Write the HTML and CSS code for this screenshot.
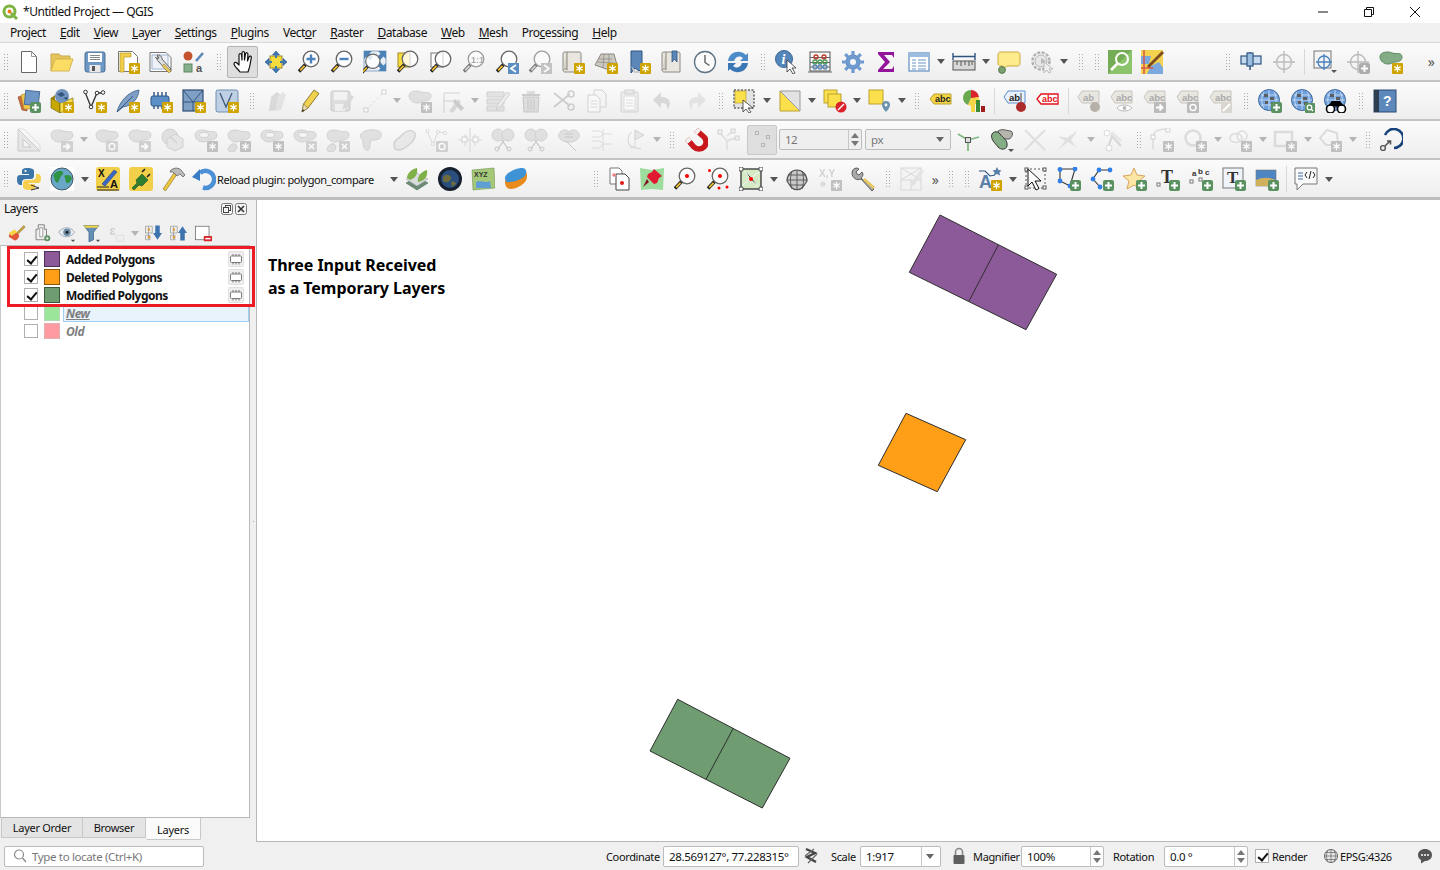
FILE: index.html
```html
<!DOCTYPE html>
<html lang="en">
<head>
    <meta charset="UTF-8">
    <title>*Untitled Project — QGIS</title>
    <link rel="stylesheet" href="styles.css">
</head>
<body>

<!-- icon sprite -->
<svg class="sprite" xmlns="http://www.w3.org/2000/svg">
    <!-- badges -->
    <symbol id="b-star" viewBox="0 0 24 24"><rect x="13" y="13" width="11" height="11" rx="1" fill="#cfa400"/><path d="M18.5 14.8v7.400M15.300 16.600l6.400 3.700M21.700 16.600l-6.400 3.700" stroke="#fff" stroke-width="1.300"/></symbol>
    <symbol id="b-plus" viewBox="0 0 24 24"><rect x="13" y="13" width="11" height="11" rx="2" fill="#5a9160"/><path d="M18.500 15v7M15 18.500h7" stroke="#fff" stroke-width="2"/></symbol>
    <symbol id="b-x" viewBox="0 0 24 24"><rect x="13" y="13" width="11" height="11" rx="1" fill="#bbb"/><path d="M16 16l5 5M21 16l-5 5" stroke="#fff" stroke-width="1.600"/></symbol>
    <symbol id="b-arr" viewBox="0 0 24 24"><rect x="11" y="13" width="12" height="11" rx="1" fill="#bbb"/><path d="M13 18.500h6M16.500 15.500l3 3-3 3" stroke="#fff" stroke-width="1.800" fill="none"/></symbol>
    <symbol id="b-rot" viewBox="0 0 24 24"><rect x="11" y="13" width="12" height="11" rx="1" fill="#bbb"/><circle cx="17" cy="18.500" r="3" stroke="#fff" stroke-width="1.400" fill="none"/></symbol>

    <!-- row one -->
    <symbol id="new" viewBox="0 0 24 24"><path d="M4.500 1.500h10l5 5v16h-15z" fill="#fff" stroke="#666"/><path d="M14.500 1.500v5h5" fill="none" stroke="#999"/></symbol>
    <symbol id="open" viewBox="0 0 24 24"><path d="M1 21V4h8l2 2h9v3H6z" fill="#e6c65c" stroke="#c8a94a"/><path d="M1 21 5 9h18l-4 12z" fill="#fbdc65" stroke="#d4b750"/></symbol>
    <symbol id="save" viewBox="0 0 24 24"><rect x="2" y="2" width="20" height="20" rx="2" fill="#6d97c4" stroke="#4d7096"/><rect x="5" y="3" width="14" height="9" fill="#fff"/><path d="M7 5.500h10M7 7.500h10M7 9.500h10" stroke="#888"/><rect x="6.500" y="15" width="11" height="7" fill="#e8e8e8"/><rect x="9" y="16" width="3" height="5" fill="#555"/></symbol>
    <symbol id="tpl" viewBox="0 0 24 24"><path d="M2.500 1.500h14l5 5v15h-19z" fill="#fff" stroke="#777"/><path d="M4 3h11v4H8v15H4z" fill="#f2cf4b" stroke="#b79a2f" stroke-width=".7"/><use href="#b-star"/></symbol>
    <symbol id="layout" viewBox="0 0 24 24"><path d="M1 2.500h16l5 5v14H1z" fill="#fff" stroke="#777"/><rect x="3" y="5" width="16" height="14" fill="#eef2f8" stroke="#9db4d2"/><path d="M9 6a4 4 0 0 0 1 6l9 10 3-3-9-10a4 4 0 0 0-5-4l2 3-2 1-2-2" fill="#ddd" stroke="#666"/><path d="M15 14l7 7-2 2-7-7z" fill="#e5c75e" stroke="#8c7a37" stroke-width=".6"/></symbol>
    <symbol id="style" viewBox="0 0 24 24"><circle cx="6" cy="6" r="4.500" fill="#c4532d"/><path d="M14 11 21 3" stroke="#5b86b5" stroke-width="2.600"/><rect x="2" y="14" width="8" height="8" fill="#85b08a" stroke="#5f8664"/><text x="14" y="22" class="sm" font-size="11" fill="#555">a</text></symbol>
    <symbol id="pan" viewBox="0 0 24 24"><path d="M9 22c-2-3-6-6-6-8 0-2 2-2 3-1l2 2V5c0-2 2-2 2.500 0l.5 5V3c0-2 2.500-2 2.500 0v7l1-6c.5-2 2.500-1.500 2.400.5L16.500 11l1.500-4c.8-1.500 2.600-1 2.300.7L19 15c-.5 3-1.500 5-2 7z" fill="#fff" stroke="#111" stroke-width="1.200" stroke-linejoin="round"/></symbol>
    <symbol id="pansel" viewBox="0 0 24 24"><rect x="6" y="6" width="12" height="12" fill="#f7dc3e" stroke="#a08a20"/><path d="M12 1l3.500 4h-7zM12 23l-3.500-4h7zM1 12l4-3.500v7zM23 12l-4 3.500v-7z" fill="#3f79b5" stroke="#234f7e" stroke-width=".6"/><path d="M12 4v4M12 20v-4M4 12h4M20 12h-4" stroke="#3f79b5" stroke-width="2"/></symbol>
    <symbol id="mag" viewBox="0 0 24 24"><path d="M9 14 2 21.500" stroke="#222" stroke-width="3.400"/><path d="M7.500 15.800 3.200 20.300" stroke="#f0c030" stroke-width="1.800"/><circle cx="14" cy="9" r="7.800" fill="#fff" fill-opacity=".8" stroke="#666" stroke-width="1.300"/></symbol>
    <symbol id="zin" viewBox="0 0 24 24"><use href="#mag"/><path d="M14 4.500v9M9.500 9h9" stroke="#4b82bd" stroke-width="2.400"/></symbol>
    <symbol id="zout" viewBox="0 0 24 24"><use href="#mag"/><path d="M9.500 9h9" stroke="#4b82bd" stroke-width="2.400"/></symbol>
    <symbol id="zfull" viewBox="0 0 24 24"><rect x="1" y="1" width="22" height="20" fill="#e8eef5" stroke="#4b78a8" stroke-width=".6"/><path d="M1 1h8L6.500 3.500 10 7 7 10 3.500 6.500 1 9zM23 1h-8l2.500 2.500L14 7l3 3 3.500-3.500L23 9zM23 21h-8l2.500-2.500L14 15l3-3 3.500 3.500L23 13z" fill="#4b82b8"/><use href="#mag" x="-3" y="3" width="22" height="22"/></symbol>
    <symbol id="zsel" viewBox="0 0 24 24"><rect x="2" y="3" width="12" height="14" fill="#f7dc3e" stroke="#a08a20"/><use href="#mag"/><path d="M14 2v14" stroke="#ddd"/></symbol>
    <symbol id="zlay" viewBox="0 0 24 24"><rect x="2" y="3" width="12" height="14" fill="#fff" stroke="#777"/><use href="#mag"/><path d="M14 2v14" stroke="#ddd"/></symbol>
    <symbol id="znat" viewBox="0 0 24 24"><use href="#mag"/><text x="9" y="13" class="sm" font-size="9" fill="#777">1:1</text></symbol>
    <symbol id="zlast" viewBox="0 0 24 24"><use href="#mag"/><rect x="13" y="13" width="11" height="11" fill="#5b8fc4"/><path d="M21 15l-5 3.500 5 3.500" fill="none" stroke="#fff" stroke-width="1.800"/></symbol>
    <symbol id="znext" viewBox="0 0 24 24"><use href="#mag"/><rect x="13" y="13" width="11" height="11" fill="#8fa9c4"/><path d="M16 15l5 3.500-5 3.500" fill="none" stroke="#fff" stroke-width="1.800"/></symbol>
    <symbol id="scroll" viewBox="0 0 24 24"><path d="M4 2c-2 0-2 1-2 2v16c0 1 1 2 2 2h16V4c0-1 0-2-2-2z" fill="#e9e6df" stroke="#8b8880"/><path d="M6 2v18c-1-2-3-1-4 0" fill="#d5d1c7" stroke="#8b8880"/></symbol>
    <symbol id="newmap" viewBox="0 0 24 24"><use href="#scroll"/><use href="#b-star"/></symbol>
    <symbol id="map3d" viewBox="0 0 24 24"><path d="M1 15 7 4h13l3 11-8 5z" fill="#ccc9c2" stroke="#8a877f"/><path d="M5 9l13 0M3 12l17 1M10 4l-1 14M15 4l0 14" stroke="#8a877f" stroke-width=".7"/><use href="#b-star"/></symbol>
    <symbol id="bmk" viewBox="0 0 24 24"><path d="M4 1h11v17l-3 3-4-3-4 5z" fill="#5a87b8" stroke="#2f5480"/><path d="M4 16l5 5h6v2H7z" fill="#ccc"/><use href="#b-star"/></symbol>
    <symbol id="bmks" viewBox="0 0 24 24"><use href="#scroll"/><path d="M12 1h5v11l-2.500-3-2.500 3z" fill="#5a87b8" stroke="#2f5480" stroke-width=".8"/></symbol>
    <symbol id="clock" viewBox="0 0 24 24"><circle cx="12" cy="12" r="10.500" fill="#fbfbfb" stroke="#5c7182" stroke-width="1.300"/><path d="M12 5v7.500l4.500 3" fill="none" stroke="#555" stroke-width="1.300"/></symbol>
    <symbol id="refresh" viewBox="0 0 24 24"><path d="M2 11C3 4 9 1 14 2c3 .5 5 2 6 3l2-2v8h-8l3-3c-2-2-7-3-9 3z" fill="#4c8cc9"/><path d="M22 13c-1 7-7 10-12 9-3-.5-5-2-6-3l-2 2v-8h8l-3 3c2 2 7 3 9-3z" fill="#3a78b5"/></symbol>
    <symbol id="ident" viewBox="0 0 24 24"><circle cx="9" cy="9" r="8.500" fill="#5486ba" stroke="#3b6896"/><text x="6.500" y="14" class="it" font-size="14" fill="#fff">i</text><path d="M12 10v12l3-3 3 5 2-1-3-5h4z" fill="#fff" stroke="#333" stroke-width=".8"/></symbol>
    <symbol id="abacus" viewBox="0 0 24 24"><rect x="2" y="2" width="20" height="19" fill="#f6f6f6" stroke="#555"/><path d="M2 7.500h20M2 12.500h20M2 17h20M0 22h24" stroke="#666"/><g fill="none" stroke-width="1.300"><circle cx="8" cy="7" r="2" stroke="#c0392b"/><circle cx="16" cy="7" r="2" stroke="#c0392b"/><circle cx="7" cy="12" r="2" stroke="#4f9a56"/><circle cx="12" cy="12" r="2" stroke="#4f9a56"/><circle cx="17" cy="12" r="2" stroke="#4f9a56"/><circle cx="7" cy="17" r="2" stroke="#5b86b5"/><circle cx="12" cy="17" r="2" stroke="#5b86b5"/><circle cx="17" cy="17" r="2" stroke="#5b86b5"/></g></symbol>
    <symbol id="gear" viewBox="0 0 24 24"><circle cx="12" cy="12" r="7" fill="#6e9ad0" stroke="#4d7bb3"/><circle cx="12" cy="12" r="3" fill="#f5f5f5"/><path d="M12 1v5M12 18v5M1 12h5M18 12h5M4.200 4.200l3.500 3.500M16.300 16.300l3.500 3.500M19.800 4.200l-3.500 3.500M7.700 16.300l-3.500 3.500" stroke="#6e9ad0" stroke-width="3.200"/></symbol>
    <symbol id="sigma" viewBox="0 0 24 24"><path d="M4 2h16v6l-2-3H10l6 7-7 7h9l2-3v6H4v-2l7-8-7-8z" fill="#93149a"/></symbol>
    <symbol id="table" viewBox="0 0 24 24"><rect x="2" y="3" width="20" height="18" fill="#fff" stroke="#6a95c4" stroke-width="1.300"/><rect x="2" y="3" width="20" height="4" fill="#9dbde0"/><path d="M5 10h4M11 10h8M5 13h4M11 13h8M5 16h4M11 16h8M5 19h4M11 19h8" stroke="#6a95c4"/></symbol>
    <symbol id="measure" viewBox="0 0 24 24"><path d="M1 3v7M23 3v7M1 6.500h22" stroke="#2f5480" stroke-width="1.400"/><rect x="1" y="11" width="22" height="9" fill="#d8d8d8" stroke="#555"/><path d="M5 11v4M9 11v5M13 11v4M17 11v5M20 11v4" stroke="#555"/></symbol>
    <symbol id="tip" viewBox="0 0 24 24"><path d="M4 2h16c2 0 3 1 3 3v8c0 2-1 3-3 3H10l-4 3v-3H4c-2 0-3-1-3-3V5c0-2 1-3 3-3z" fill="#fdeb8c" stroke="#c9a93c"/><circle cx="5" cy="20" r="3.400" fill="#7ca36f" stroke="#56784d"/></symbol>
    <symbol id="action" viewBox="0 0 24 24"><circle cx="11" cy="11" r="6" fill="#ddd" stroke="#888"/><circle cx="11" cy="11" r="8.500" fill="none" stroke="#888" stroke-width="2.500" stroke-dasharray="3 1.500"/><path d="M11 8v6l5-3z" fill="#999"/><path d="M14 12v11l3-3 2 3 2-1-2-3h4z" fill="#eee" stroke="#888" stroke-width=".8"/></symbol>
    <symbol id="greenlens" viewBox="0 0 24 24"><rect width="24" height="24" fill="#74ad55"/><path d="M0 24 24 0v24z" fill="#8bc46a"/><circle cx="14" cy="9" r="6" fill="none" stroke="#fff" stroke-width="2"/><path d="M9.500 13.500 3 20" stroke="#fff" stroke-width="2.600"/></symbol>
    <symbol id="osm" viewBox="0 0 24 24"><rect width="22" height="24" fill="#f3d24f"/><path d="M0 6h10l-2 8H0zM10 16l8-4 4 6v6H6z" fill="#7ba8dd"/><path d="M3 0v24M0 18h12" stroke="#d9554d" stroke-width="1.500"/><path d="M6 16 21 1l2 2L8 18z" fill="#7a4a21"/></symbol>
    <symbol id="decor" viewBox="0 0 24 24"><path d="M11 2v18" stroke="#2f5480" stroke-width="1.500"/><rect x="2" y="6" width="20" height="8" fill="#c6daf0" stroke="#2f5480" stroke-width="1.200"/><rect x="8" y="3" width="6" height="13" fill="#9abde0" stroke="#2f5480" stroke-width="1.200"/></symbol>
    <symbol id="cross" viewBox="0 0 24 24"><path d="M12 1v22M1 12h22" stroke="#999" stroke-width="1.400"/><circle cx="12" cy="12" r="7.500" fill="none" stroke="#999" stroke-width="1.400"/></symbol>
    <symbol id="crsbox" viewBox="0 0 24 24"><rect x="1" y="1" width="17" height="17" fill="#f4f4f4" stroke="#777"/><circle cx="11" cy="12" r="6" fill="none" stroke="#4b82bd" stroke-width="1.300"/><path d="M11 4v16M3 12h16" stroke="#4b82bd" stroke-width="1.300"/><path d="M18 20h6l-3 3z" fill="#555"/></symbol>
    <symbol id="crsplus" viewBox="0 0 24 24"><use href="#cross"/><use href="#b-plus"/></symbol>
    <symbol id="blob" viewBox="0 0 24 24"><path d="M1 7C1 3 5 2 9 2c3 0 4 1.500 7 1.500S23 3 23 7s-4 5-7 5-3 2-7 2-8-3-8-7z" fill="#d5d2cb" stroke="#bdbab2"/></symbol>
    <symbol id="blobg" viewBox="0 0 24 24"><path d="M1 7C1 3 5 2 9 2c3 0 4 1.500 7 1.500S23 3 23 7s-4 5-7 5-3 2-7 2-8-3-8-7z" fill="#85ad85" stroke="#5f8664"/><use href="#b-star"/></symbol>

    <!-- row two -->
    <symbol id="dsm" viewBox="0 0 24 24"><path d="M1 8l9-3v17l-5-1z" fill="#c96b3a" stroke="#8e4a27" stroke-width=".6"/><path d="M4 6l9-3 3 17H7z" fill="#f0c64d" stroke="#a88b2d" stroke-width=".6"/><rect x="8" y="2" width="14" height="14" transform="rotate(6 15 9)" fill="#6e97c8" stroke="#4d7096"/><use href="#b-plus"/></symbol>
    <symbol id="gpkg" viewBox="0 0 24 24"><path d="M1 9l4-3v12l-4-3z" fill="#9a8114"/><path d="M1 9l9 5v10l-9-5z" fill="#c6a800" stroke="#6c5c00" stroke-width=".6"/><path d="M23 9l-13 5v10l13-5z" fill="#f4dc50" stroke="#6c5c00" stroke-width=".6"/><circle cx="12" cy="7" r="7" fill="#6f93bc"/><path d="M7 5l5-2 3 3-4 2zM13 9l5-1-1 3z" fill="#33557d"/><use href="#b-star"/></symbol>
    <symbol id="shp" viewBox="0 0 24 24"><path d="M2 3l6 15L14 4l6 0" fill="none" stroke="#333" stroke-width="1.300"/><g fill="#fff" stroke="#333"><circle cx="2.500" cy="3" r="1.800"/><circle cx="8" cy="18" r="1.800"/><circle cx="14" cy="4" r="1.800"/><circle cx="20" cy="3.500" r="1.800"/></g><use href="#b-star"/></symbol>
    <symbol id="feather" viewBox="0 0 24 24"><path d="M1 23C4 12 12 3 23 1c-1 8-5 15-16 17z" fill="#7f9fc4" stroke="#4d7096"/><path d="M1 23 17 7" stroke="#2f5480" stroke-width=".9"/><use href="#b-star"/></symbol>
    <symbol id="chip" viewBox="0 0 24 24"><rect x="2" y="7" width="18" height="10" rx="2" fill="#5a8fc7" stroke="#2f5480"/><path d="M5 3v4M9 3v4M13 3v4M17 3v4M5 17v3M9 17v3M13 17v3" stroke="#2f5480" stroke-width="1.400"/><use href="#b-star"/></symbol>
    <symbol id="mesh" viewBox="0 0 24 24"><rect x="1" y="1" width="20" height="21" fill="#7f9fc4" stroke="#2f4f73" stroke-width="1.200"/><path d="M1 13h20M11 13v9M1 1l10 12M21 1 11 13" stroke="#2f4f73" stroke-width=".9"/><use href="#b-star"/></symbol>
    <symbol id="vtx" viewBox="0 0 24 24"><rect x="1" y="1" width="22" height="22" rx="2" fill="#bfd0e4" stroke="#6f8fb0"/><path d="M5 4l6 14 6-14" fill="none" stroke="#3d5a7a" stroke-width="1.300"/><use href="#b-star"/></symbol>
    <symbol id="pencils" viewBox="0 0 24 24"><path d="M5 22 7 8l6-5 4 3-4 15z" fill="#ccc9c2"/><path d="M11 22l3-15 5-4 3 3-5 15z" fill="#dbd8d2"/></symbol>
    <symbol id="pencil" viewBox="0 0 24 24"><path d="M5 23 6.500 15 17 1l5 3.500L11 19z" fill="#f0d24f" stroke="#8c7a37"/><path d="M5 23 6.500 15l4.500 4z" fill="#e8d9b8" stroke="#8c7a37" stroke-width=".7"/><path d="M5 23l.6-3 2 1.500z" fill="#333"/></symbol>
    <symbol id="saveedit" viewBox="0 0 24 24"><rect x="1" y="2" width="19" height="20" rx="2" fill="#d3d0c9" stroke="#b0ada6"/><rect x="4" y="3" width="13" height="8" fill="#f1f0ed"/><rect x="5" y="15" width="10" height="7" fill="#eee"/><path d="M12 21l2-6 7-9 3 2-7 10z" fill="#c9c6be"/></symbol>
    <symbol id="digit" viewBox="0 0 24 24"><path d="M3 21 21 3" stroke="#ccc" stroke-dasharray="3 2"/><rect x="1" y="19" width="4" height="4" fill="#fff" stroke="#bbb"/><rect x="19" y="1" width="4" height="4" fill="#fff" stroke="#bbb"/></symbol>
    <symbol id="blobstar" viewBox="0 0 24 24"><use href="#blob"/><use href="#b-star"/></symbol>
    <symbol id="vtool" viewBox="0 0 24 24"><path d="M3 4v20M3 4h16M3 12h12" stroke="#bbb"/><path d="M8 22l9-12 3 3-8 11z" fill="#c9c6be"/><path d="M14 10l9 9-3 3-8-9z" fill="#b5b2aa"/></symbol>
    <symbol id="editm" viewBox="0 0 24 24"><path d="M1 3h17v5H1zM1 10h17v5H1zM1 17h17v5H1z" fill="#d9d6cf" stroke="#bdbab2"/><path d="M10 21l2-6 9-12 3 2-9 12z" fill="#e8e6e0" stroke="#bdbab2"/></symbol>
    <symbol id="trash" viewBox="0 0 24 24"><path d="M3 5h18v2H3z" fill="#bcb0ad"/><path d="M8 2h8v3H8z" fill="#ccc"/><path d="M4 8h16l-1 15H5z" fill="#d6ceca" stroke="#b3a6a2"/><path d="M9 10v11M12 10v11M15 10v11" stroke="#b3a6a2"/></symbol>
    <symbol id="cut" viewBox="0 0 24 24"><path d="M2 4l16 13M2 18 18 5" stroke="#b5b5b5" stroke-width="1.800"/><circle cx="19" cy="5" r="3" fill="none" stroke="#b5b5b5" stroke-width="1.500"/><circle cx="19" cy="18" r="3" fill="none" stroke="#b5b5b5" stroke-width="1.500"/></symbol>
    <symbol id="copy" viewBox="0 0 24 24"><path d="M9 1h8l4 4v13H9z" fill="#f4f4f4" stroke="#bbb"/><path d="M3 6h8l4 4v13H3z" fill="#fafafa" stroke="#bbb"/><path d="M5.500 12h7M5.500 15h7M5.500 18h7" stroke="#ccc"/></symbol>
    <symbol id="paste" viewBox="0 0 24 24"><rect x="3" y="3" width="17" height="20" rx="1" fill="#ece9e4" stroke="#bbb"/><rect x="7" y="1" width="9" height="4" fill="#ddd" stroke="#bbb"/><rect x="6" y="7" width="11" height="14" fill="#fff" stroke="#ccc"/><path d="M8 11h7M8 14h7M8 17h7" stroke="#ccc"/></symbol>
    <symbol id="undo" viewBox="0 0 24 24"><path d="M10 3 2 11l8 8v-5c5 0 7 2 6 7 5-6 4-13-6-13z" fill="#c9c6be"/></symbol>
    <symbol id="redo" viewBox="0 0 24 24"><path d="M14 3l8 8-8 8v-5c-5 0-7 2-6 7-5-6-4-13 6-13z" fill="#dbd8d2"/></symbol>
    <symbol id="sel" viewBox="0 0 24 24"><rect x="1" y="1" width="20" height="18" fill="#e2e2e2" stroke="#222" stroke-dasharray="2 1.500"/><rect x="2" y="2" width="11" height="12" fill="#fbe04b" stroke="#b9a030" stroke-width=".7"/><path d="M10 11v12l3-3 3 4 2-1-3-4h5z" fill="#fff" stroke="#333" stroke-width=".8"/></symbol>
    <symbol id="selattr" viewBox="0 0 24 24"><path d="M2 2v20h20z" fill="#fbe04b" stroke="#b9a030"/><path d="M2 2h20v20z" fill="#e2e2e2" stroke="#999"/></symbol>
    <symbol id="desel" viewBox="0 0 24 24"><rect x="1" y="1" width="13" height="13" fill="#fbe04b" stroke="#b9a030"/><rect x="5" y="5" width="13" height="13" fill="#fbe04b" stroke="#b9a030"/><circle cx="18" cy="18" r="5.500" fill="#d9222a"/><path d="M15 21l6-6" stroke="#fff" stroke-width="1.400"/></symbol>
    <symbol id="locsel" viewBox="0 0 24 24"><rect x="1" y="1" width="14" height="14" fill="#fbe04b" stroke="#b9a030"/><path d="M18 12a4 4 0 0 1 4 4c0 3-4 7-4 7s-4-4-4-7a4 4 0 0 1 4-4z" fill="#6c93ad"/><circle cx="18" cy="16" r="1.400" fill="#fff"/></symbol>
    <symbol id="abc" viewBox="0 0 24 24"><path d="M5 5h17v10H5L1 10z" fill="#f3d545" stroke="#b9a030"/><text x="6" y="13" class="sm" font-size="9" fill="#222">abc</text></symbol>
    <symbol id="pie" viewBox="0 0 24 24"><path d="M9 1a8 8 0 0 1 8 7l-8 2z" fill="#d9222a"/><path d="M1 9a8 8 0 0 1 8-8v8l-3 7a8 8 0 0 1-5-7z" fill="#6aa84f"/><path d="M9 9l8-1a8 8 0 0 1-11 8z" fill="#f3d545"/><rect x="9" y="14" width="4" height="9" fill="#f3d545"/><rect x="14" y="11" width="4" height="12" fill="#3a8a3a"/><rect x="19" y="17" width="4" height="6" fill="#a01d1d"/></symbol>
    <symbol id="abcblue" viewBox="0 0 24 24"><path d="M5 2h17v12H5L1 8z" fill="#e7f0fb" stroke="#5b8fd1"/><text x="6" y="11.500" class="sm" font-size="9.500" fill="#222">ab</text><path d="M18 4v10" stroke="#999" stroke-width="2"/><circle cx="18" cy="18" r="5" fill="#ad2a2a"/></symbol>
    <symbol id="abcred" viewBox="0 0 24 24"><path d="M5 5h17v10H5L1 10z" fill="#fff" stroke="#e3101a" stroke-width="1.300"/><text x="6" y="13" class="sm" font-size="9" fill="#e3101a">abc</text></symbol>
    <symbol id="abcg" viewBox="0 0 24 24"><path d="M5 2h17v12H5L1 8z" fill="#e8e6e0" stroke="#c9c6be"/><text x="6" y="11.500" class="sm" font-size="9.500" fill="#aaa">abc</text></symbol>
    <symbol id="abcpin" viewBox="0 0 24 24"><path d="M5 2h17v12H5L1 8z" fill="#e8e6e0" stroke="#c9c6be"/><text x="6" y="11.500" class="sm" font-size="9.500" fill="#aaa">ab</text><circle cx="18" cy="18" r="5" fill="#b5b0a8"/></symbol>
    <symbol id="abceye" viewBox="0 0 24 24"><use href="#abcg"/><path d="M7 19c3-4 11-4 15 0-4 4-12 4-15 0z" fill="#fff" stroke="#bbb"/><circle cx="14.500" cy="19" r="2" fill="#bbb"/></symbol>
    <symbol id="abcarr" viewBox="0 0 24 24"><use href="#abcg"/><use href="#b-arr"/></symbol>
    <symbol id="abcrot" viewBox="0 0 24 24"><use href="#abcg"/><use href="#b-rot"/></symbol>
    <symbol id="abcedit" viewBox="0 0 24 24"><use href="#abcg"/><rect x="12" y="13" width="11" height="11" rx="1" fill="#d9d6cf"/><path d="M14 22l7-7" stroke="#fff" stroke-width="2"/></symbol>
    <symbol id="globe" viewBox="0 0 24 24"><circle cx="11" cy="11" r="10.500" fill="#6c9fdc" stroke="#3f6aa0"/><path d="M3 6h16M1 11h20M3 16h16M11 1v20M6 3c-3 5-3 11 0 16M16 3c3 5 3 11 0 16" fill="none" stroke="#d5e2f2" stroke-width=".8"/><path d="M6 5h4v3H6zM12 8h4v3h-4zM7 12h3v3H7zM13 13h4v3h-4z" fill="#5e5e5e"/></symbol>
    <symbol id="globeplus" viewBox="0 0 24 24"><use href="#globe"/><use href="#b-plus"/></symbol>
    <symbol id="globefind" viewBox="0 0 24 24"><use href="#globe"/><rect x="14" y="14" width="10" height="10" rx="1" fill="#5a9160"/><circle cx="18.500" cy="18.500" r="2.300" fill="none" stroke="#fff" stroke-width="1.200"/><path d="M20 20l2 2" stroke="#fff" stroke-width="1.200"/></symbol>
    <symbol id="binoc" viewBox="0 0 24 24"><use href="#globe"/><circle cx="6.500" cy="20" r="4" fill="#fff" stroke="#000" stroke-width="1.600"/><circle cx="17.500" cy="20" r="4" fill="#fff" stroke="#000" stroke-width="1.600"/><path d="M4 17l4-5h8l4 5H13l-1 2-1-2z" fill="#000"/></symbol>
    <symbol id="help" viewBox="0 0 24 24"><rect x="1" y="1" width="22" height="22" fill="#5c88bc" stroke="#2c4a6e"/><rect x="1" y="1" width="5" height="22" fill="#2c3e50"/><text x="10" y="17" class="sm" font-size="14" fill="#fff">?</text></symbol>

    <!-- row three -->
    <symbol id="triangle" viewBox="0 0 24 24"><path d="M1 1v22h22z" fill="#e0ddd6" stroke="#b5b2aa"/><path d="M6 11v8h8z" fill="#f4f4f4" stroke="#b5b2aa"/><path d="M1 1h6l16 16v6" fill="none" stroke="#cfccc4"/></symbol>
    <symbol id="blobarr" viewBox="0 0 24 24"><use href="#blob"/><use href="#b-arr"/></symbol>
    <symbol id="blobrot" viewBox="0 0 24 24"><use href="#blob"/><use href="#b-rot"/></symbol>
    <symbol id="hex" viewBox="0 0 24 24"><circle cx="9" cy="9" r="8" fill="#d5d2cb" stroke="#bdbab2"/><path d="M14 6l8 5v8l-8 4-8-4v-8z" fill="#dfdcd6" stroke="#bdbab2"/><path d="M9 9l7 6" stroke="#aaa"/></symbol>
    <symbol id="ringstar" viewBox="0 0 24 24"><use href="#blob"/><ellipse cx="10" cy="7" rx="4.500" ry="2.500" fill="#f4f4f4" stroke="#bdbab2"/><use href="#b-star"/></symbol>
    <symbol id="partstar" viewBox="0 0 24 24"><use href="#blob"/><path d="M1 22c0-4 4-7 7-6s2 5 0 7-6 1-7-1z" fill="#d5d2cb" stroke="#bdbab2"/><use href="#b-star"/></symbol>
    <symbol id="ringx" viewBox="0 0 24 24"><use href="#blob"/><ellipse cx="10" cy="7" rx="4.500" ry="2.500" fill="#f4f4f4" stroke="#bdbab2"/><use href="#b-x"/></symbol>
    <symbol id="partx" viewBox="0 0 24 24"><use href="#blob"/><path d="M1 22c0-4 4-7 7-6s2 5 0 7-6 1-7-1z" fill="#d5d2cb" stroke="#bdbab2"/><use href="#b-x"/></symbol>
    <symbol id="reshape" viewBox="0 0 24 24"><path d="M2 6c4-5 12-5 18-3 3 1 3 6 0 8-4 2-6 0-8 2s0 8-3 9-5-3-5-7-4-6-2-9z" fill="#d5d2cb" stroke="#bdbab2"/></symbol>
    <symbol id="offset" viewBox="0 0 24 24"><path d="M2 16c0-5 5-5 8-9s9-6 12-3 0 9-4 12-6 6-11 6-5-3-5-6z" fill="#e2e0da" stroke="#bdbab2" stroke-width="1.400"/></symbol>
    <symbol id="vrot" viewBox="0 0 24 24"><path d="M2 3l6 13 5-12 7 1" fill="none" stroke="#c9c6be"/><g fill="#fff" stroke="#c9c6be"><circle cx="2.500" cy="3" r="1.600"/><circle cx="8" cy="16" r="1.600"/><circle cx="13" cy="4" r="1.600"/><circle cx="20" cy="5" r="1.600"/></g><use href="#b-rot"/></symbol>
    <symbol id="split" viewBox="0 0 24 24"><path d="M0 12h24M12 0v24M7 6v12M17 6v12" stroke="#ccc" stroke-width="1.200"/><rect x="4" y="9" width="5" height="5" fill="#fff" stroke="#bbb"/><rect x="15" y="9" width="5" height="5" fill="#fff" stroke="#bbb"/></symbol>
    <symbol id="scis" viewBox="0 0 24 24"><circle cx="7" cy="7" r="6" fill="#d5d2cb" stroke="#bdbab2"/><circle cx="17" cy="7" r="6" fill="#d5d2cb" stroke="#bdbab2"/><path d="M11 12l6 9M13 12l-6 9" stroke="#aaa" stroke-width="1.200"/><circle cx="6" cy="21" r="2" fill="none" stroke="#aaa"/><circle cx="18" cy="21" r="2" fill="none" stroke="#aaa"/></symbol>
    <symbol id="merge" viewBox="0 0 24 24"><path d="M2 6c2-5 8-5 10-2 2-3 8-3 10 2s-6 9-10 8c-4 1-12-3-10-8z" fill="#d5d2cb" stroke="#bdbab2"/><path d="M8 6h8M8 9h8M9 13l10 10" stroke="#aaa"/></symbol>
    <symbol id="lines" viewBox="0 0 24 24"><path d="M2 3h8l3 3h9M2 9h8l3-3M2 13h8l3 3h9M2 20h8l3-4M13 1v22" fill="none" stroke="#ccc"/></symbol>
    <symbol id="flag" viewBox="0 0 24 24"><path d="M12 3v17" stroke="#ccc"/><path d="M12 2l9 5-9 5z" fill="#ddd" stroke="#bbb"/><path d="M9 4a9 9 0 0 0 0 15l9 2" fill="none" stroke="#bbb"/><path d="M9 21l-3-3h5z" fill="#ccc"/></symbol>
    <symbol id="magnet" viewBox="0 0 24 24"><path d="M3 11l7 8A7 7 0 0 0 20 9l-8-7" fill="none" stroke="#c8181d" stroke-width="5.500"/><path d="M3 11l2.600 3M12 2l3 2.600" fill="none" stroke="#f2f2f2" stroke-width="5.500"/></symbol>
    <symbol id="tree" viewBox="0 0 24 24"><path d="M10 22V13L3 5M10 13l8-3M10 8l6-5" fill="none" stroke="#ccc" stroke-width="1.400"/><g fill="#eee" stroke="#bbb"><rect x="1" y="2" width="4" height="4"/><rect x="14" y="1" width="4" height="4"/><rect x="18" y="8" width="4" height="4"/></g></symbol>
    <symbol id="ymode" viewBox="0 0 24 24"><path d="M11 12 1 6M11 12l11-3M11 12v11" fill="none" stroke="#84b884" stroke-width="1.800"/><rect x="8.500" y="9.500" width="5" height="5" fill="#ddd" stroke="#555"/></symbol>
    <symbol id="trace" viewBox="0 0 24 24"><path d="M8 3c5-3 9 0 13 0 3 2 1 7-2 8H13L9 9z" fill="#b7b4ad" stroke="#555"/><path d="M2 6c2-3 6-3 8 0 3 4 8 6 7 12-1 4-6 4-9 1C5 15 0 11 2 6z" fill="#85ad85" stroke="#333"/><path d="M18 21h6l-3 3z" fill="#555"/></symbol>
    <symbol id="xmark" viewBox="0 0 24 24"><path d="M2 2l20 20M22 2 2 22" stroke="#d5d2cb" stroke-width="2.400"/></symbol>
    <symbol id="xfill" viewBox="0 0 24 24"><path d="M2 22 9 13 2 8l9 2 11-8-7 10 5 7-8-5z" fill="#d5d2cb"/></symbol>
    <symbol id="chain" viewBox="0 0 24 24"><circle cx="6" cy="5" r="3" fill="#fff" stroke="#c9c6be"/><circle cx="8" cy="20" r="3" fill="#fff" stroke="#c9c6be"/><path d="M8 17l3-9 9 10" fill="none" stroke="#c9c6be" stroke-width="2.200"/><path d="M11 3l10 9-2 2-9-9z" fill="#dfdcd6"/></symbol>
    <symbol id="curve" viewBox="0 0 24 24"><path d="M3 21V9c0-5 5-8 15-8" fill="none" stroke="#ccc" stroke-width="1.500"/><rect x="1" y="7" width="4" height="4" fill="#fff" stroke="#bbb"/><rect x="16" y="0" width="4" height="4" fill="#fff" stroke="#bbb"/><use href="#b-star"/></symbol>
    <symbol id="circle" viewBox="0 0 24 24"><circle cx="10" cy="10" r="7.500" fill="none" stroke="#ccc" stroke-width="2.500"/><use href="#b-star"/></symbol>
    <symbol id="ellipse" viewBox="0 0 24 24"><ellipse cx="8" cy="10" rx="6" ry="4.500" fill="none" stroke="#ccc" stroke-width="1.500"/><circle cx="14" cy="8" r="5" fill="none" stroke="#ccc" stroke-width="1.500"/><use href="#b-star"/></symbol>
    <symbol id="rect" viewBox="0 0 24 24"><rect x="2" y="4" width="17" height="14" fill="none" stroke="#ccc" stroke-width="2.500"/><use href="#b-star"/></symbol>
    <symbol id="poly" viewBox="0 0 24 24"><path d="M2 10l7-8 10 3 1 12H8z" fill="none" stroke="#ccc" stroke-width="2"/><use href="#b-star"/></symbol>
    <symbol id="rerun" viewBox="0 0 24 24"><path d="M6 7A9.500 9.500 0 1 1 15 20" fill="none" stroke="#17427a" stroke-width="2.600"/><path d="M6 18l5-5M8 13h3.500v3.500" fill="none" stroke="#555" stroke-width="1.600"/><circle cx="4" cy="20" r="2.400" fill="none" stroke="#555" stroke-width="1.400"/></symbol>

    <!-- row four -->
    <symbol id="python" viewBox="0 0 24 24"><path d="M11 1c-6 0-6 2-6 3v3h7v1H3C0 8 0 11 0 13s1 5 3 5h2v-3c0-2 2-3 4-3h5c2 0 3-2 3-3V4c0-2-3-3-6-3z" fill="#3c76a8"/><path d="M12 23c6 0 6-2 6-3v-3h-6v-1h9c2 0 3-2 3-5 0-2-1-4-3-4h-2v3c0 2-2 3-4 3H9c-2 0-3 2-3 3v4c0 2 3 3 6 3z" fill="#f5cf4d"/><circle cx="8.500" cy="4" r="1.100" fill="#fff"/><path d="M14 18l8 3-8 2" fill="none" stroke="#333"/></symbol>
    <symbol id="earth" viewBox="0 0 24 24"><rect width="24" height="24" fill="#fff"/><circle cx="12" cy="12" r="11" fill="#68a8c6" stroke="#456"/><path d="M4 7c4-4 7-4 9-2 1 3-2 3-3 6s-2 6-4 4-1-5-3-6zM14 9c3-2 7-1 8 2-1 3-3 6-5 5s-1-4-3-7z" fill="#2f9344"/></symbol>
    <symbol id="lexi" viewBox="0 0 24 24"><rect x="0" y="0" width="24" height="24" rx="3" fill="#f1cf48"/><text x="2" y="10" class="sm" font-size="10" fill="#111">X</text><text x="14" y="21" class="sm" font-size="11" fill="#111">A</text><path d="M6 17 18 3l3 2L9 19z" fill="#3a68c8" stroke="#203f86" stroke-width=".6"/><path d="M1 20h12M1 23h22" stroke="#222"/></symbol>
    <symbol id="plug" viewBox="0 0 24 24"><rect width="24" height="24" rx="3" fill="#f1cf48"/><path d="M3 21l5-5-1-3 6-6 6 6-6 6-3-1-5 5z" fill="#2f7d2f" stroke="#1c4e1c" stroke-width=".6"/><path d="M13 5l3-3M18 10l3-3" stroke="#222" stroke-width="1.600"/></symbol>
    <symbol id="hammer" viewBox="0 0 24 24"><path d="M1 22 12 6l2.500 2L3.500 24z" fill="#f0c83c" stroke="#8c7a37" stroke-width=".7"/><path d="M9 3c4-3 8-2 10 0l4 5-2 2-3-3-3 2-4-4-3 0z" fill="#bbb" stroke="#555" stroke-width=".7"/></symbol>
    <symbol id="reload" viewBox="0 0 24 24"><path d="M8 6A8.500 8.500 0 1 1 11 20.500" fill="none" stroke="#4b8fd6" stroke-width="4.500"/><path d="M0 10 8 2v12z" fill="#3a7cc4"/></symbol>
    <symbol id="layers" viewBox="0 0 24 24"><path d="M12 10 23 16l-11 7L1 16z" fill="#6a8a74" stroke="#53705e" stroke-width=".6"/><path d="M12 6l11 6-11 7L1 12z" fill="#d8dcdc" stroke="#aaa" stroke-width=".6"/><path d="M2 11c0-5 5-9 10-10 1 5-1 10-7 12zM13 15C12 9 17 4 22 3c1 6-2 11-9 12z" fill="#7fb04a"/></symbol>
    <symbol id="space" viewBox="0 0 24 24"><circle cx="12" cy="12" r="12" fill="#16202e"/><circle cx="12" cy="12" r="9" fill="#2a4f7f"/><path d="M5 10c3-4 7-2 8 0s-3 8-8 4zM13 15c3-1 5 0 5 2l-4 3z" fill="#6d6a3c"/></symbol>
    <symbol id="xyzmap" viewBox="0 0 24 24"><path d="M1 3l22-2 1 20-22 2z" fill="#a5c878" stroke="#6e9350" stroke-width=".6"/><path d="M5 15c5-3 9 2 14-1l1 7H5z" fill="#5f9fd6"/><text x="3" y="10" class="sm" font-size="7" fill="#333">XYZ</text></symbol>
    <symbol id="gpk" viewBox="0 0 24 24"><path d="M1 15c0-6 12-12 18-12 4 0 4 5 4 7 0 6-10 12-16 12-4 0-6-3-6-7z" fill="#e98a1d"/><path d="M1 11C1 6 12 1 18 1c5 0 5 5 3 8-4 4-15 7-18 6-1 0-2-2-2-4z" fill="#3d93d6"/></symbol>
    <symbol id="duppages" viewBox="0 0 24 24"><path d="M3 1h9l3 3v13H3z" fill="#fff" stroke="#777"/><path d="M9 7h9l4 4v12H9z" fill="#fff" stroke="#444"/><circle cx="7" cy="8" r="1.800" fill="#f08080"/><circle cx="15" cy="16" r="2" fill="#e01818"/></symbol>
    <symbol id="pin" viewBox="0 0 24 24"><path d="M0 1l12 2 12-2-1 22-11-1-11 1z" fill="#9ddc9c"/><path d="M14 2l8 7-3 2-2 5-3 1-7-7 1-3 4-2z" fill="#e01830"/><path d="M7 12l-4 8 6-5" fill="#801020"/></symbol>
    <symbol id="magdot" viewBox="0 0 24 24"><use href="#mag"/><circle cx="14" cy="9" r="2" fill="#f00"/></symbol>
    <symbol id="magdots" viewBox="0 0 24 24"><use href="#magdot"/><g fill="#f00"><circle cx="3.500" cy="3.500" r="1.500"/><circle cx="13" cy="21" r="1.500"/><circle cx="21" cy="20" r="1.500"/></g></symbol>
    <symbol id="frame" viewBox="0 0 24 24"><rect x="2" y="2" width="20" height="20" fill="#d4ebc5" stroke="#333" stroke-width="1.300"/><path d="M4 18l7-6 9-7M6 4l5 8 8 7" stroke="#fff"/><circle cx="12" cy="12" r="2" fill="#f00"/><g fill="#fff" stroke="#444"><rect x="0" y="0" width="4" height="4" rx="1"/><rect x="20" y="0" width="4" height="4" rx="1"/><rect x="0" y="20" width="4" height="4" rx="1"/><rect x="20" y="20" width="4" height="4" rx="1"/></g></symbol>
    <symbol id="dome" viewBox="0 0 24 24"><path d="M2 14a10 11 0 0 1 20 0l-4 6a8 8 0 0 1-12 0z" fill="#c9c9c9" stroke="#555" stroke-width="1.200"/><path d="M12 3v20M2 13h20M3 8h18M7 4c-2 5-2 13 0 18M17 4c2 5 2 13 0 18M4 18h16" fill="none" stroke="#555" stroke-width=".9"/></symbol>
    <symbol id="xy" viewBox="0 0 24 24"><text x="1" y="10" class="sm" font-size="10" fill="#bbb">X,Y</text><circle cx="5" cy="17" r="2.600" fill="#ccc"/><use href="#b-star"/></symbol>
    <symbol id="wrench" viewBox="0 0 24 24"><path d="M1 6c0-3 2-5 5-5l2 1-3 3 1 2 2 1 3-3 1 2c0 2-1 3-2 4l13 11-2 2L10 12c-4 2-9-1-9-6z" fill="#aaa" stroke="#444" stroke-width=".8"/><path d="M12 13l10 9 2-2-10-9z" fill="#e7c862"/></symbol>
    <symbol id="editdis" viewBox="0 0 24 24"><rect x="1" y="1" width="20" height="22" fill="#f2f2f2" stroke="#c8c8c8"/><path d="M1 1l20 12M21 1 1 13M1 13h20M11 13v10" stroke="#c8c8c8"/><path d="M10 21l2-6 9-13 3 2-9 13z" fill="#dbd8d2"/></symbol>
    <symbol id="labelA" viewBox="0 0 24 24"><text x="1" y="21" class="sm" font-size="18" fill="#5a7fa8">A</text><path d="M1 4h6l5 5 5-1" fill="none" stroke="#2f5480" stroke-width="1.100"/><path d="M19 0l1.500 3 3 .5-2 2 .5 3-3-1.500-3 1.500.5-3-2-2 3-.5z" fill="#5a7fa8"/><use href="#b-star"/></symbol>
    <symbol id="selpts" viewBox="0 0 24 24"><rect x="2" y="2" width="19" height="19" fill="none" stroke="#555" stroke-dasharray="2 2"/><g fill="#fff" stroke="#555"><rect x="1" y="1" width="3" height="3"/><rect x="19" y="1" width="3" height="3"/><rect x="1" y="19" width="3" height="3"/><rect x="19" y="19" width="3" height="3"/></g><path d="M4 2v17l4-4 4 8 3-1.500-4-7.500h6z" fill="#fff" stroke="#111"/></symbol>
    <symbol id="addpoly" viewBox="0 0 24 24"><path d="M3 2h15l-5 17-10-5z" fill="none" stroke="#333" stroke-width="1.100"/><g fill="#2f7fe8"><circle cx="3" cy="2.500" r="2.400"/><circle cx="18" cy="2" r="2.400"/><circle cx="13" cy="19" r="2.400"/><circle cx="3" cy="14" r="2.400"/></g><use href="#b-plus"/></symbol>
    <symbol id="addline" viewBox="0 0 24 24"><path d="M20 3H9L3 12l7 8" fill="none" stroke="#333" stroke-width="1.100"/><g fill="#2f7fe8"><circle cx="20" cy="3" r="2.400"/><circle cx="9" cy="3" r="2.400"/><circle cx="3" cy="12" r="2.400"/><circle cx="10" cy="20" r="2.400"/></g><use href="#b-plus"/></symbol>
    <symbol id="addstar" viewBox="0 0 24 24"><path d="M11 1l3 7 8 1-6 5 2 8-7-4-7 4 2-8-6-5 8-1z" fill="#fbe6a6" stroke="#d9a45b"/><use href="#b-plus"/></symbol>
    <symbol id="addtext" viewBox="0 0 24 24"><text x="5" y="16" class="ser" font-size="18" fill="#333">T</text><rect x="1" y="16" width="3" height="3" fill="#fff" stroke="#777"/><use href="#b-plus"/></symbol>
    <symbol id="addcurve" viewBox="0 0 24 24"><text x="3" y="9" class="sm" font-size="8" fill="#333">a</text><text x="9" y="7" class="sm" font-size="8" fill="#333">b</text><text x="16" y="8" class="sm" font-size="8" fill="#333">c</text><g fill="#fff" stroke="#777"><rect x="1" y="13" width="3" height="3"/><rect x="10" y="11" width="3" height="3"/></g><use href="#b-plus"/></symbol>
    <symbol id="addbox" viewBox="0 0 24 24"><rect x="1" y="1" width="20" height="20" fill="#f0f4fa" stroke="#777"/><text x="5" y="16" class="ser" font-size="17" fill="#333">T</text><use href="#b-plus"/></symbol>
    <symbol id="addpic" viewBox="0 0 24 24"><rect x="1" y="3" width="20" height="16" fill="#4d86c2" stroke="#777" stroke-width=".6"/><path d="M1 13c6-3 13-3 20 0v6H1z" fill="#d0b05c"/><use href="#b-plus"/></symbol>
    <symbol id="html" viewBox="0 0 24 24"><path d="M1 1h22v16H9l-6 6v-6H1z" fill="#fafafa" stroke="#777"/><path d="M4 6h5M4 9h5M4 12h5" stroke="#3a6ea5" stroke-width="1.200"/><path d="M13 5l-2 3 2 3M19 5l2 3-2 3M17 4l-2 8" fill="none" stroke="#222"/></symbol>

    <!-- layers panel + status bar -->
    <symbol id="brush" viewBox="0 0 24 24"><path d="M11 12 21 2l2 2-10 10z" fill="#c9a33c" stroke="#7b6a2c" stroke-width=".6"/><path d="M2 13c4 0 6-3 9-2l4 4c0 4-4 7-6 7l-8-5z" fill="#e0573a"/><path d="M1 12l8-5 3 4-7 5z" fill="#f3d545"/></symbol>
    <symbol id="lgroup" viewBox="0 0 24 24"><path d="M7 7V1h8v6h3v14H4V7z" fill="#eee" stroke="#666"/><path d="M9 5h4v12H9z" fill="#fff" stroke="#888"/><circle cx="19" cy="19" r="4" fill="#5a9160"/><path d="M17 19h4M19 17v4" stroke="#fff"/></symbol>
    <symbol id="eye" viewBox="0 0 24 24"><path d="M1 11c5-8 16-8 21 0-5 8-16 8-21 0z" fill="#e9eef4" stroke="#8a97a5"/><circle cx="12" cy="11" r="5" fill="#6f8ea8"/><circle cx="12" cy="11" r="2" fill="#222"/><path d="M17 21h6l-3 3z" fill="#555"/></symbol>
    <symbol id="filter" viewBox="0 0 24 24"><path d="M1 2h20L14 11v10l-6 3V11z" fill="#6490b8" stroke="#3d6487"/><path d="M1 2h20l-2 3H3z" fill="#f3d545"/><path d="M17 21h6l-3 3z" fill="#555"/></symbol>
    <symbol id="epsilon" viewBox="0 0 24 24"><text x="2" y="15" class="sm" font-size="17" fill="#bbb">ε</text><path d="M11 15h10v8H11z" fill="#eee" stroke="#ccc"/></symbol>
    <symbol id="expand" viewBox="0 0 24 24"><path d="M2 3h9v9H2zM2 15h6v6H2z" fill="#eee" stroke="#999"/><path d="M6 3v18" stroke="#999"/><rect x="5" y="6" width="3" height="3" fill="#e59a32"/><rect x="5" y="16" width="3" height="3" fill="#e59a32"/><path d="M15 2h6v10h3l-6 9-6-9h3z" fill="#3d74ad"/></symbol>
    <symbol id="collapse" viewBox="0 0 24 24"><path d="M2 3h9v9H2zM2 15h6v6H2z" fill="#eee" stroke="#999"/><path d="M6 3v18" stroke="#999"/><rect x="5" y="6" width="3" height="3" fill="#e59a32"/><rect x="5" y="16" width="3" height="3" fill="#e59a32"/><path d="M15 22h6V12h3l-6-9-6 9h3z" fill="#3d74ad"/></symbol>
    <symbol id="rmlayer" viewBox="0 0 24 24"><rect x="2" y="3" width="18" height="18" fill="#fff" stroke="#666"/><rect x="13" y="16" width="11" height="7" rx="1" fill="#d9222a"/><path d="M15 19.500h7" stroke="#fff" stroke-width="2"/></symbol>
    <symbol id="ind" viewBox="0 0 16 16"><rect x=".5" y=".5" width="15" height="15" rx="1" fill="#eee" stroke="#e0e0e0"/><rect x="2.500" y="5" width="11" height="6.500" rx="1" fill="#fff" stroke="#7a7a7a"/><path d="M5 3v2M8 3v2M11 3v2M5 11.500v2M8 11.500v2M11 11.500v2" stroke="#7a7a7a"/></symbol>
    <symbol id="search" viewBox="0 0 14 14"><circle cx="6" cy="5.500" r="4.500" fill="none" stroke="#8a8a8a" stroke-width="1.200"/><path d="M9.500 9 13 13" stroke="#8a8a8a" stroke-width="1.400"/></symbol>
    <symbol id="crstoggle" viewBox="0 0 18 18"><path d="M4 2l9 4-8 4 9 5" fill="none" stroke="#444" stroke-width="2.400"/><path d="M3 9l9-7M6 16l9-9" stroke="#666" stroke-width="1.300"/></symbol>
    <symbol id="lock" viewBox="0 0 14 18"><path d="M3.500 9V5a3.500 3.500 0 0 1 7 0v4" fill="none" stroke="#888" stroke-width="1.600"/><rect x="1.500" y="8" width="11" height="9" rx="1" fill="#5f5f5f"/></symbol>
    <symbol id="crsglobe" viewBox="0 0 16 16"><circle cx="8" cy="8" r="6.500" fill="#e6e6e6" stroke="#666"/><path d="M1.500 8h13M8 1.500v13M3 4.500h10M3 11.500h10M5 2.500c-2 3.500-2 7.500 0 11M11 2.500c2 3.500 2 7.500 0 11" fill="none" stroke="#666" stroke-width=".7"/></symbol>
    <symbol id="msg" viewBox="0 0 16 16"><path d="M8 1c4 0 7 2.500 7 6s-3 6-7 6l-4 2.500V12C2 11 1 9 1 7c0-3.500 3-6 7-6z" fill="#555"/><circle cx="5" cy="7" r="1" fill="#fff"/><circle cx="8" cy="7" r="1" fill="#fff"/><circle cx="11" cy="7" r="1" fill="#fff"/></symbol>
    <symbol id="dockfloat" viewBox="0 0 12 12"><rect x=".5" y=".5" width="11" height="11" rx="2" fill="#f4f4f4" stroke="#777"/><rect x="4.500" y="2.500" width="5" height="5" fill="none" stroke="#444"/><rect x="2.500" y="4.500" width="5" height="5" fill="#f4f4f4" stroke="#444"/></symbol>
    <symbol id="dockclose" viewBox="0 0 12 12"><rect x=".5" y=".5" width="11" height="11" rx="2" fill="#f4f4f4" stroke="#777"/><path d="M3 3l6 6M9 3 3 9" stroke="#333" stroke-width="1.600"/></symbol>
</svg>

<div class="app">
    <header class="titlebar">
        <svg class="app-logo" viewBox="0 0 16 16"><circle cx="7.500" cy="7.500" r="5.500" fill="none" stroke="#7db343" stroke-width="3"/><path d="M9 9l6 6" stroke="#7db343" stroke-width="3"/><circle cx="7.500" cy="7.500" r="2" fill="#ee7913"/></svg>
        <span class="title-text">*Untitled Project — QGIS</span>
        <div class="win-btns">
            <svg viewBox="0 0 12 12"><path d="M1 6h10" stroke="#111"/></svg>
            <svg viewBox="0 0 12 12"><path d="M3.500 3V1.500h7v7H9M1.500 3.500h7v7h-7z" fill="none" stroke="#111"/></svg>
            <svg viewBox="0 0 12 12"><path d="M1 1l10 10M11 1 1 11" stroke="#111"/></svg>
        </div>
    </header>

    <nav class="menubar">
        <span>Pro<u>j</u>ect</span><span><u>E</u>dit</span><span><u>V</u>iew</span><span><u>L</u>ayer</span><span><u>S</u>ettings</span><span><u>P</u>lugins</span><span>Vect<u>o</u>r</span><span><u>R</u>aster</span><span><u>D</u>atabase</span><span><u>W</u>eb</span><span><u>M</u>esh</span><span>Pro<u>c</u>essing</span><span><u>H</u>elp</span>
    </nav>

    <div class="bar">
        <i class="grip first"></i>
        <span class="t"><svg><use href="#new"/></svg></span>
        <span class="t"><svg><use href="#open"/></svg></span>
        <span class="t"><svg><use href="#save"/></svg></span>
        <span class="t"><svg><use href="#tpl"/></svg></span>
        <span class="t"><svg><use href="#layout"/></svg></span>
        <span class="t"><svg><use href="#style"/></svg></span>
        <i class="grip"></i>
        <span class="t on"><svg><use href="#pan"/></svg></span>
        <span class="t"><svg><use href="#pansel"/></svg></span>
        <span class="t"><svg><use href="#zin"/></svg></span>
        <span class="t"><svg><use href="#zout"/></svg></span>
        <span class="t"><svg><use href="#zfull"/></svg></span>
        <span class="t"><svg><use href="#zsel"/></svg></span>
        <span class="t"><svg><use href="#zlay"/></svg></span>
        <span class="t off"><svg><use href="#znat"/></svg></span>
        <span class="t"><svg><use href="#zlast"/></svg></span>
        <span class="t off"><svg><use href="#znext"/></svg></span>
        <span class="t"><svg><use href="#newmap"/></svg></span>
        <span class="t"><svg><use href="#map3d"/></svg></span>
        <span class="t"><svg><use href="#bmk"/></svg></span>
        <span class="t"><svg><use href="#bmks"/></svg></span>
        <span class="t"><svg><use href="#clock"/></svg></span>
        <span class="t"><svg><use href="#refresh"/></svg></span>
        <i class="grip"></i>
        <span class="t"><svg><use href="#ident"/></svg></span>
        <span class="t"><svg><use href="#abacus"/></svg></span>
        <span class="t"><svg><use href="#gear"/></svg></span>
        <span class="t"><svg><use href="#sigma"/></svg></span>
        <span class="t"><svg><use href="#table"/></svg></span><i class="dd"></i>
        <span class="t"><svg><use href="#measure"/></svg></span><i class="dd"></i>
        <span class="t"><svg><use href="#tip"/></svg></span>
        <span class="t off"><svg><use href="#action"/></svg></span><i class="dd"></i>
        <i class="gap-s"></i>
        <i class="grip first"></i>
        <i class="gap-s"></i>
        <i class="grip first"></i>
        <span class="t"><svg><use href="#greenlens"/></svg></span>
        <span class="t"><svg><use href="#osm"/></svg></span>
        <i class="gap-r1"></i>
        <i class="grip first"></i>
        <span class="t"><svg><use href="#decor"/></svg></span>
        <span class="t off"><svg><use href="#cross"/></svg></span>
        <i class="sep"></i>
        <span class="t"><svg><use href="#crsbox"/></svg></span>
        <span class="t off"><svg><use href="#crsplus"/></svg></span>
        <span class="t"><svg><use href="#blobg"/></svg></span>
        <span class="more end">»</span>
    </div>

    <div class="bar">
        <i class="grip first"></i>
        <span class="t"><svg><use href="#dsm"/></svg></span>
        <span class="t"><svg><use href="#gpkg"/></svg></span>
        <span class="t"><svg><use href="#shp"/></svg></span>
        <span class="t"><svg><use href="#feather"/></svg></span>
        <span class="t"><svg><use href="#chip"/></svg></span>
        <span class="t"><svg><use href="#mesh"/></svg></span>
        <span class="t"><svg><use href="#vtx"/></svg></span>
        <i class="grip"></i>
        <span class="t off"><svg><use href="#pencils"/></svg></span>
        <span class="t"><svg><use href="#pencil"/></svg></span>
        <span class="t off"><svg><use href="#saveedit"/></svg></span>
        <span class="t off"><svg><use href="#digit"/></svg></span><i class="dd dis"></i>
        <span class="t off"><svg><use href="#blobstar"/></svg></span>
        <span class="t off"><svg><use href="#vtool"/></svg></span><i class="dd dis"></i>
        <span class="t off"><svg><use href="#editm"/></svg></span>
        <span class="t off"><svg><use href="#trash"/></svg></span>
        <span class="t off"><svg><use href="#cut"/></svg></span>
        <span class="t off"><svg><use href="#copy"/></svg></span>
        <span class="t off"><svg><use href="#paste"/></svg></span>
        <span class="t off"><svg><use href="#undo"/></svg></span>
        <span class="t off"><svg><use href="#redo"/></svg></span>
        <i class="grip"></i>
        <span class="t"><svg><use href="#sel"/></svg></span><i class="dd"></i>
        <span class="t"><svg><use href="#selattr"/></svg></span><i class="dd"></i>
        <span class="t"><svg><use href="#desel"/></svg></span><i class="dd"></i>
        <span class="t"><svg><use href="#locsel"/></svg></span><i class="dd"></i>
        <i class="grip"></i>
        <span class="t"><svg><use href="#abc"/></svg></span>
        <span class="t"><svg><use href="#pie"/></svg></span>
        <i class="sep"></i>
        <span class="t"><svg><use href="#abcblue"/></svg></span>
        <span class="t"><svg><use href="#abcred"/></svg></span>
        <i class="sep"></i>
        <span class="t"><svg><use href="#abcpin"/></svg></span>
        <span class="t"><svg><use href="#abceye"/></svg></span>
        <span class="t"><svg><use href="#abcarr"/></svg></span>
        <span class="t"><svg><use href="#abcrot"/></svg></span>
        <span class="t"><svg><use href="#abcedit"/></svg></span>
        <i class="grip"></i>
        <span class="t"><svg><use href="#globeplus"/></svg></span>
        <span class="t"><svg><use href="#globefind"/></svg></span>
        <span class="t"><svg><use href="#binoc"/></svg></span>
        <i class="grip"></i>
        <span class="t"><svg><use href="#help"/></svg></span>
    </div>

    <div class="bar">
        <i class="grip first"></i>
        <span class="t off"><svg><use href="#triangle"/></svg></span>
        <span class="t off"><svg><use href="#blobarr"/></svg></span><i class="dd dis"></i>
        <span class="t off"><svg><use href="#blobrot"/></svg></span>
        <span class="t off"><svg><use href="#blobarr"/></svg></span>
        <span class="t off"><svg><use href="#hex"/></svg></span>
        <span class="t off"><svg><use href="#ringstar"/></svg></span>
        <span class="t off"><svg><use href="#partstar"/></svg></span>
        <span class="t off"><svg><use href="#ringstar"/></svg></span>
        <span class="t off"><svg><use href="#ringx"/></svg></span>
        <span class="t off"><svg><use href="#partx"/></svg></span>
        <span class="t off"><svg><use href="#reshape"/></svg></span>
        <span class="t off"><svg><use href="#offset"/></svg></span>
        <span class="t off"><svg><use href="#vrot"/></svg></span>
        <span class="t off"><svg><use href="#split"/></svg></span>
        <span class="t off"><svg><use href="#scis"/></svg></span>
        <span class="t off"><svg><use href="#scis"/></svg></span>
        <span class="t off"><svg><use href="#merge"/></svg></span>
        <span class="t off"><svg><use href="#lines"/></svg></span>
        <span class="t off"><svg><use href="#flag"/></svg></span><i class="dd dis"></i>
        <i class="grip"></i>
        <span class="t"><svg><use href="#magnet"/></svg></span>
        <span class="t off"><svg><use href="#tree"/></svg></span>
        <span class="snapbox"><b></b><b></b><b></b></span>
        <span class="spin snap-val">12<em></em></span>
        <span class="combo snap-unit">px</span>
        <span class="t"><svg><use href="#ymode"/></svg></span>
        <span class="t"><svg><use href="#trace"/></svg></span>
        <span class="t off"><svg><use href="#xmark"/></svg></span>
        <span class="t off"><svg><use href="#xfill"/></svg></span><i class="dd dis"></i>
        <span class="t off"><svg><use href="#chain"/></svg></span>
        <i class="grip"></i>
        <span class="t off"><svg><use href="#curve"/></svg></span>
        <span class="t off"><svg><use href="#circle"/></svg></span><i class="dd dis"></i>
        <span class="t off"><svg><use href="#ellipse"/></svg></span><i class="dd dis"></i>
        <span class="t off"><svg><use href="#rect"/></svg></span><i class="dd dis"></i>
        <span class="t off"><svg><use href="#poly"/></svg></span><i class="dd dis"></i>
        <i class="grip"></i>
        <span class="t"><svg><use href="#rerun"/></svg></span>
    </div>

    <div class="bar last">
        <i class="grip first"></i>
        <span class="t"><svg><use href="#python"/></svg></span>
        <span class="t"><svg><use href="#earth"/></svg></span><i class="dd"></i>
        <span class="t"><svg><use href="#lexi"/></svg></span>
        <span class="t"><svg><use href="#plug"/></svg></span>
        <span class="t"><svg><use href="#hammer"/></svg></span>
        <span class="t reload-ico"><svg><use href="#reload"/></svg></span>
        <span class="reload-text">Reload plugin: polygon_compare</span>
        <i class="dd"></i>
        <span class="t"><svg><use href="#layers"/></svg></span>
        <span class="t"><svg><use href="#space"/></svg></span>
        <span class="t"><svg><use href="#xyzmap"/></svg></span>
        <span class="t"><svg><use href="#gpk"/></svg></span>
        <i class="gap-r4"></i>
        <i class="grip first"></i>
        <span class="t"><svg><use href="#duppages"/></svg></span>
        <span class="t"><svg><use href="#pin"/></svg></span>
        <span class="t"><svg><use href="#magdot"/></svg></span>
        <span class="t"><svg><use href="#magdots"/></svg></span>
        <span class="t"><svg><use href="#frame"/></svg></span><i class="dd"></i>
        <span class="t"><svg><use href="#dome"/></svg></span>
        <span class="t off"><svg><use href="#xy"/></svg></span>
        <span class="t"><svg><use href="#wrench"/></svg></span>
        <i class="grip"></i>
        <span class="t off"><svg><use href="#editdis"/></svg></span>
        <span class="more">»</span>
        <i class="grip"></i>
        <i class="gap-r4b"></i>
        <i class="grip first"></i>
        <span class="t"><svg><use href="#labelA"/></svg></span><i class="dd"></i>
        <span class="t"><svg><use href="#selpts"/></svg></span>
        <span class="t"><svg><use href="#addpoly"/></svg></span>
        <span class="t"><svg><use href="#addline"/></svg></span>
        <span class="t"><svg><use href="#addstar"/></svg></span>
        <span class="t"><svg><use href="#addtext"/></svg></span>
        <span class="t"><svg><use href="#addcurve"/></svg></span>
        <span class="t"><svg><use href="#addbox"/></svg></span>
        <span class="t"><svg><use href="#addpic"/></svg></span>
        <i class="sep"></i>
        <span class="t"><svg><use href="#html"/></svg></span><i class="dd"></i>
    </div>

    <main class="workspace">
        <aside class="side">
            <div class="dock-title">
                <span>Layers</span>
                <svg class="dock-btn"><use href="#dockfloat"/></svg>
                <svg class="dock-btn"><use href="#dockclose"/></svg>
            </div>
            <div class="dock-tools">
                <span class="lt"><svg><use href="#brush"/></svg></span>
                <span class="lt"><svg><use href="#lgroup"/></svg></span>
                <span class="lt"><svg><use href="#eye"/></svg></span>
                <span class="lt"><svg><use href="#filter"/></svg></span>
                <span class="lt off"><svg><use href="#epsilon"/></svg></span><i class="dd dis lt-dd"></i>
                <span class="lt"><svg><use href="#expand"/></svg></span>
                <span class="lt"><svg><use href="#collapse"/></svg></span>
                <span class="lt"><svg><use href="#rmlayer"/></svg></span>
            </div>
            <div class="tree">
                <div class="row strong"><i class="check on"></i><i class="swatch purple"></i><span class="name">Added Polygons</span><svg class="chip-ind"><use href="#ind"/></svg></div>
                <div class="row strong"><i class="check on"></i><i class="swatch orange"></i><span class="name">Deleted Polygons</span><svg class="chip-ind"><use href="#ind"/></svg></div>
                <div class="row strong"><i class="check on"></i><i class="swatch green"></i><span class="name">Modified Polygons</span><svg class="chip-ind"><use href="#ind"/></svg></div>
                <div class="row muted current"><i class="check"></i><i class="swatch mint"></i><span class="name"><u>New</u></span></div>
                <div class="row muted"><i class="check"></i><i class="swatch pink"></i><span class="name">Old</span></div>
                <div class="redbox"></div>
            </div>
            <div class="tabs">
                <span class="tab tab-order">Layer Order</span>
                <span class="tab tab-browser">Browser</span>
                <span class="tab tab-layers active">Layers</span>
            </div>
        </aside>
        <i class="splitter"></i>
        <section class="canvas">
            <p class="note">Three Input Received<br>as a Temporary Layers</p>
            <svg class="map" viewBox="257 200 1183 641" preserveAspectRatio="none">
                <g stroke="#2e2e2e" stroke-width="1" stroke-linejoin="round">
                    <polygon points="940,215 1056.700,274.300 1026,329.700 909.300,272.300" fill="#8d5a99"/>
                    <line x1="998.300" y1="245" x2="969" y2="301"/>
                    <polygon points="906,413.300 965.700,439.700 937.300,491.700 878.300,465.300" fill="#ff9e17"/>
                    <polygon points="677.700,699.300 790,758.300 762.300,808 650,751" fill="#6f9d71"/>
                    <line x1="733.300" y1="728.300" x2="706" y2="779.300"/>
                </g>
            </svg>
        </section>
    </main>

    <footer class="status">
        <div class="locator"><svg><use href="#search"/></svg><span>Type to locate (Ctrl+K)</span></div>
        <div class="status-right">
            <span class="lb w-coord">Coordinate</span>
            <span class="field coord">28.569127°, 77.228315°</span>
            <svg class="st-ico crs-t"><use href="#crstoggle"/></svg>
            <span class="lb w-scale">Scale</span>
            <span class="field combo scale">1:917</span>
            <svg class="st-ico lock-ico"><use href="#lock"/></svg>
            <span class="lb w-mag">Magnifier</span>
            <span class="spin mag-field">100%<em></em></span>
            <span class="lb w-rot">Rotation</span>
            <span class="spin rot-field">0.0 °<em></em></span>
            <i class="check on st-check"></i>
            <span class="lb w-render">Render</span>
            <svg class="st-ico globe-ico"><use href="#crsglobe"/></svg>
            <span class="lb w-epsg">EPSG:4326</span>
            <svg class="st-ico msg-ico"><use href="#msg"/></svg>
        </div>
    </footer>
</div>

</body>
</html>
```

FILE: styles.css
```css
* {
    box-sizing: border-box;
}

html, body {
    margin: 0;
    height: 100%;
    overflow: hidden;
}

body {
    font-family: "Noto Sans", "Open Sans", sans-serif;
    font-size: 12px;
    letter-spacing: -0.46px;
    color: #111;
    background-color: #f0f0f0;
}

i, em {
    font-style: normal;
}

.sprite {
    display: none;
}

svg text {
    letter-spacing: 0;
}

.sm {
    font-family: "Liberation Sans", sans-serif;
    font-weight: 700;
}

.it {
    font-family: "Liberation Serif", serif;
    font-style: italic;
    font-weight: 700;
}

.ser {
    font-family: "Liberation Serif", serif;
    font-weight: 700;
}

.app {
    display: flex;
    flex-direction: column;
    height: 870px;
}

/* title bar */
.titlebar {
    display: flex;
    align-items: center;
    height: 23px;
    background-color: #fff;
    padding-left: 2px;
}

.app-logo {
    width: 16px;
    height: 16px;
}

.title-text {
    margin-left: 5px;
}

.win-btns {
    margin-left: auto;
    display: flex;
    gap: 34px;
    padding-right: 19px;
}

.win-btns svg {
    width: 12px;
    height: 12px;
}

/* menu */
.menubar {
    display: flex;
    align-items: center;
    height: 20px;
    padding-left: 10px;
    gap: 14px;
    border-bottom: 1px solid #d8d8d8;
}

/* toolbars */
.bar {
    display: flex;
    align-items: center;
    flex: none;
    height: 39px;
    background: linear-gradient(#fbfbfb, #eeeeee);
    border-bottom: 2px solid #c4c4c4;
}

.bar.last {
    height: 40px;
    padding-top: 1px;
    border-bottom: 3px solid #bdbdbd;
}

.t {
    display: flex;
    align-items: center;
    justify-content: center;
    flex: none;
    width: 33px;
    height: 33px;
}

.t svg {
    width: 24px;
    height: 24px;
}

.t.on {
    width: 31px;
    height: 32px;
    margin: 0 1px;
    background-color: #dedede;
    border: 1px solid #b4b4b4;
    border-radius: 2px;
}

.off svg {
    filter: grayscale(1) opacity(0.62);
}

.grip {
    flex: none;
    width: 16px;
    height: 18px;
    background-image: radial-gradient(#a9a9a9 0.7px, transparent 0.9px);
    background-size: 3px 3px;
    background-repeat: repeat;
    background-clip: content-box;
    padding: 0 4px 0 7px;
}

.grip.first {
    width: 12px;
    padding: 0 3px 0 4px;
}

.gap-s {
    flex: none;
    width: 4.5px;
}

.dd {
    flex: none;
    width: 12px;
    height: 5px;
}

.bar.last .dd {
    width: 13px;
}

.dd::after {
    content: "";
    display: block;
    width: 0;
    height: 0;
    margin: 0 auto;
    border-left: 4px solid transparent;
    border-right: 4px solid transparent;
    border-top: 5px solid #555;
}

.dd.dis::after {
    border-top-color: #b4b4b4;
}

.sep {
    flex: none;
    width: 8px;
    height: 26px;
    background: linear-gradient(#d8d8d8, #d8d8d8) center / 1px 100% no-repeat;
}

.bar.last .sep {
    width: 6px;
}

.more {
    flex: none;
    width: 14px;
    font-size: 14px;
    color: #555;
    text-align: center;
}

.more.end {
    margin-left: auto;
    margin-right: 2px;
}

.gap-r1 {
    flex: none;
    width: 53px;
}

.gap-r4 {
    flex: none;
    width: 58px;
}

.gap-r4b {
    flex: none;
    width: 3px;
}

.reload-ico {
    width: 27px;
}

.reload-text {
    flex: none;
    width: 170px;
    font-size: 11px;
    letter-spacing: -0.43px;
    white-space: nowrap;
}

.snapbox {
    flex: none;
    position: relative;
    width: 30px;
    height: 30px;
    margin: 0 2px;
    background-color: #dedede;
    border: 1px solid #c8c8c8;
    border-radius: 2px;
}

.snapbox b {
    position: absolute;
    width: 4px;
    height: 4px;
    border: 1px solid #b5b5b5;
}

.snapbox b:nth-child(1) { left: 7px; top: 5px; }
.snapbox b:nth-child(2) { left: 18px; top: 9px; }
.snapbox b:nth-child(3) { left: 13px; top: 17px; }

/* spin boxes and combos */
.spin, .combo, .field {
    position: relative;
    flex: none;
    display: flex;
    align-items: center;
    height: 21px;
    padding-left: 5px;
    font-size: 11.5px;
    background-color: #fff;
    border: 1px solid #bcbcbc;
    border-radius: 2px;
}

.spin em {
    position: absolute;
    right: 0;
    top: 0;
    bottom: 0;
    width: 13px;
    border-left: 1px solid #c8c8c8;
}

.spin em::before, .spin em::after {
    content: "";
    position: absolute;
    left: 2px;
    border-left: 4px solid transparent;
    border-right: 4px solid transparent;
}

.spin em::before {
    top: 3px;
    border-bottom: 5px solid #777;
}

.spin em::after {
    bottom: 3px;
    border-top: 5px solid #777;
}

.combo::after {
    content: "";
    position: absolute;
    right: 6px;
    top: 7px;
    border-left: 4px solid transparent;
    border-right: 4px solid transparent;
    border-top: 5px solid #666;
}

.snap-val {
    width: 83px;
    margin-right: 3px;
    color: #777;
    background-color: #efefef;
}

.snap-unit {
    width: 86px;
    margin-right: 1.5px;
    color: #777;
    background-color: #efefef;
}

/* body of the window */
.workspace {
    flex: 1;
    display: flex;
    min-height: 0;
}

.side {
    flex: none;
    width: 250px;
    display: flex;
    flex-direction: column;
}

.dock-title {
    display: flex;
    align-items: center;
    height: 18px;
    padding: 0 3px 1px 4px;
    gap: 2px;
}

.dock-title span {
    margin-right: auto;
}

.dock-btn {
    width: 12px;
    height: 12px;
}

.dock-tools {
    display: flex;
    align-items: center;
    height: 27px;
    padding: 3px 0 0 4px;
}

.lt {
    flex: none;
    display: flex;
    justify-content: center;
    width: 25px;
}

.lt svg {
    width: 18px;
    height: 18px;
}

.lt-dd {
    width: 11px;
}

.tree {
    position: relative;
    flex: 1;
    padding-top: 4px;
    background-color: #fff;
    border: 1px solid #b8b8b8;
    border-left-color: #c8c8c8;
}

.row {
    display: flex;
    align-items: center;
    height: 18px;
    padding-left: 23px;
}

.check {
    flex: none;
    position: relative;
    width: 14px;
    height: 14px;
    background-color: #fff;
    border: 1px solid #b0b0b0;
}

.check.on::after {
    content: "";
    position: absolute;
    left: 4px;
    top: 1px;
    width: 4px;
    height: 8px;
    border: solid #111;
    border-width: 0 2px 2px 0;
    transform: rotate(40deg);
}

.swatch {
    flex: none;
    width: 16px;
    height: 16px;
    margin-left: 6px;
    border: 1px solid rgba(0, 0, 0, 0.45);
}

.swatch.purple { background-color: #8d5a99; }
.swatch.orange { background-color: #ff9e17; }
.swatch.green { background-color: #6f9d71; }
.swatch.mint { background-color: #9be59b; border-color: #b9d8b9; }
.swatch.pink { background-color: #ff9aa2; border-color: #e0b0b0; }

.name {
    flex: 1;
    margin-left: 6px;
    white-space: nowrap;
}

.strong .name {
    font-weight: 700;
    letter-spacing: -0.5px;
}

.muted .name {
    font-weight: 700;
    font-style: italic;
    color: #7f7f7f;
}

.current .name {
    background-color: #e8f3fc;
    border: 1px solid #9fd0f3;
    padding-left: 2px;
    margin-left: 3px;
    height: 17px;
    line-height: 15px;
}

.chip-ind {
    flex: none;
    width: 16px;
    height: 16px;
    margin-right: 5px;
}

.redbox {
    position: absolute;
    left: 6px;
    top: 0;
    width: 248px;
    height: 61px;
    border: 3px solid #ed1c24;
    z-index: 2;
}

.tabs {
    display: flex;
    align-items: flex-start;
    height: 24px;
    padding-left: 1px;
    font-size: 11px;
    letter-spacing: -0.3px;
}

.tab {
    height: 20px;
    line-height: 20px;
    text-align: center;
    background-color: #e4e4e4;
    border: 1px solid #c8c8c8;
    border-top: 0;
}

.tab + .tab {
    border-left: 0;
}

.tab-order {
    width: 82px;
}

.tab-browser {
    width: 63px;
}

.tab-layers {
    width: 55px;
}

.tab.active {
    height: 22px;
    line-height: 23px;
    background-color: #fbfbfb;
    border-radius: 0 0 2px 2px;
}

.splitter {
    flex: none;
    width: 6px;
    background: radial-gradient(#aaa 0.6px, transparent 0.8px) center / 3px 3px no-repeat;
}

.canvas {
    position: relative;
    flex: 1;
    background-color: #fff;
    border-left: 1px solid #b8b8b8;
    border-bottom: 1px solid #b8b8b8;
    overflow: hidden;
}

.map {
    position: absolute;
    left: 0;
    top: 0;
    width: 1183px;
    height: 641px;
}

.note {
    position: relative;
    z-index: 1;
    margin: 54px 0 0 11px;
    font-size: 16px;
    font-weight: 700;
    line-height: 23px;
    color: #000;
    letter-spacing: -0.05px;
}

/* status bar */
.status {
    flex: none;
    display: flex;
    align-items: center;
    height: 28px;
    padding-left: 4px;
    font-size: 11px;
    letter-spacing: -0.35px;
}

.locator {
    flex: none;
    display: flex;
    align-items: center;
    gap: 5px;
    width: 200px;
    height: 21px;
    padding-left: 8px;
    font-size: 11.5px;
    background-color: #fff;
    border: 1px solid #bcbcbc;
    border-radius: 2px;
    color: #777;
}

.locator svg {
    width: 14px;
    height: 14px;
}

.status-right {
    margin-left: 402px;
    display: flex;
    align-items: center;
}

.lb {
    flex: none;
    white-space: nowrap;
}

.w-coord { width: 54px; }
.w-scale { width: 26px; }
.w-mag { width: 45px; }
.w-rot { width: 42px; }
.w-render { width: 36px; }
.w-epsg { width: 54px; }

.field.coord {
    width: 136px;
    margin-left: 3px;
}

.crs-t {
    width: 18px;
    height: 18px;
    margin: 0 11px 0 3px;
}

.field.scale {
    width: 81px;
    margin-left: 3px;
}

.field.scale::before {
    content: "";
    position: absolute;
    right: 18px;
    top: 0;
    bottom: 0;
    border-left: 1px solid #c8c8c8;
}

.lock-ico {
    width: 14px;
    height: 18px;
    margin: 0 7px 0 11px;
}

.mag-field {
    width: 83px;
    margin: 0 9px 0 3px;
}

.rot-field {
    width: 84px;
    margin: 0 7px 0 9px;
}

.st-check {
    margin-right: 3px;
}

.globe-ico {
    width: 16px;
    height: 16px;
    margin: 0 1px 0 15px;
}

.msg-ico {
    width: 16px;
    height: 16px;
    margin-left: 23px;
}
```
